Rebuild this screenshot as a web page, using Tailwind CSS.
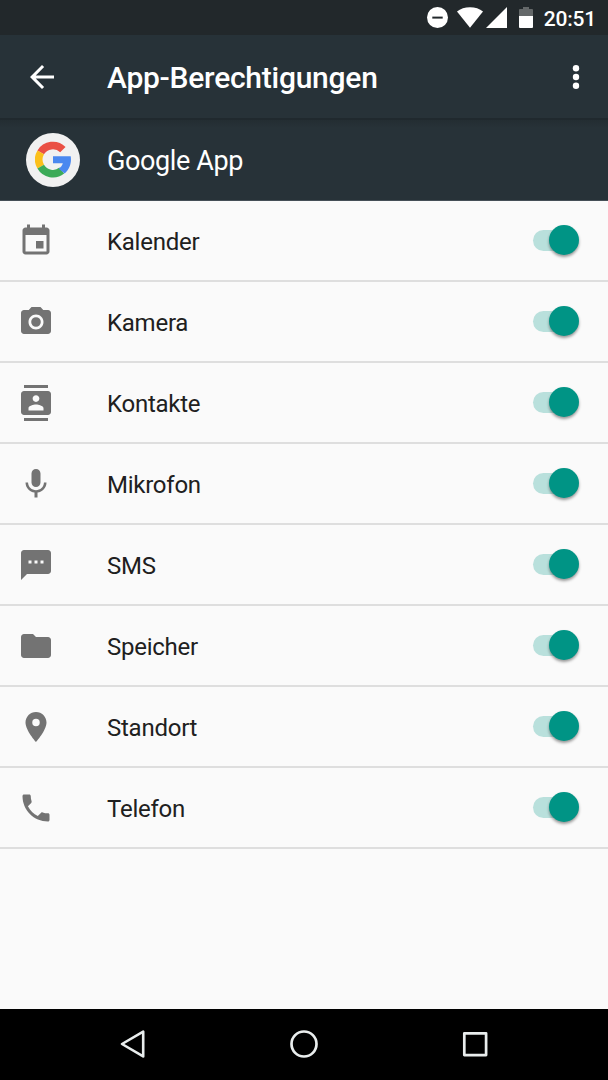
<!doctype html>
<html lang="de">
<head>
  <meta charset="utf-8">
  <title>App-Berechtigungen</title>
  <script src="https://cdn.jsdelivr.net/npm/@tailwindcss/browser@4"></script>
</head>

<body class="bg-[#fafafa] h-[1080px] overflow-hidden flex flex-col font-['Roboto',sans-serif]">
  <!-- status bar -->
  <div class="h-[35px] shrink-0 bg-[#22282b] flex items-center justify-end pr-3 text-white">
    <svg class="w-[21px] h-[21px] mr-[9px]" viewBox="0 0 21 21"><circle cx="10.5" cy="10.5" r="10.5" fill="#fff"/><path d="M5.3 9.6h10.4v2H5.3z" fill="#22282b"/></svg>
    <svg class="w-[26px] h-[21px] mr-[3px]" viewBox="0 0 26 21" fill="#fff"><path d="M13 20.7 0 4.6C3.300 1.800 8 .3 13 .3s9.700 1.500 13 4.300z"/></svg>
    <svg class="w-[21px] h-[21px] mr-3" viewBox="0 0 21 21" fill="#fff"><path d="M0 21 21 0v21z"/></svg>
    <svg class="w-[14px] h-[21px] mr-[11px]" viewBox="0 0 14 21"><path d="M4 0h6v2h3q1 0 1 1v6H0V3q0-1 1-1h3z" fill="#646869"/><path d="M0 9h14v11q0 1-1 1H1q-1 0-1-1z" fill="#fff"/></svg>
    <span class="text-[21px] leading-none font-medium tracking-[-0.2px] mt-[3px]">20:51</span>
  </div>

  <!-- toolbar -->
  <header class="h-[85px] shrink-0 bg-[#273238] border-b-2 border-[#20292e] flex items-center pl-[23.5px] pr-[14.5px] text-white">
    <svg class="w-9 h-9" viewBox="0 0 24 24" fill="#fff"><path d="M20 11H7.830l5.590-5.590L12 4l-8 8 8 8 1.410-1.410L7.830 13H20v-2z"/></svg>
    <h1 class="ml-[47.5px] mt-[3px] text-[30px] leading-none font-medium tracking-[-0.25px] flex-1">App-Berechtigungen</h1>
    <svg class="w-9 h-9" viewBox="0 0 36 36" fill="#fff"><circle cx="18" cy="9.200" r="3.200"/><circle cx="18" cy="18" r="3.200"/><circle cx="18" cy="26.800" r="3.200"/></svg>
  </header>

  <!-- app -->
  <section class="h-[81px] shrink-0 bg-linear-to-b from-[#232d32] to-[#273238] to-10% border-b border-[#454f57] flex items-center pl-[26px] text-white">
    <div class="w-[54px] h-[54px] -mt-px rounded-full bg-[#f1f1f1] flex items-center justify-center">
      <svg class="w-9 h-[37px]" viewBox="0 0 36 37" fill="none" stroke-width="7.600">
        <path d="M27.870 8.630A14.200 14.200 0 0 0 5.700 11.400" stroke="#ea5044"/>
        <path d="M5.700 11.400A14.200 14.200 0 0 0 5.700 25.600" stroke="#fbc01b"/>
        <path d="M5.700 25.600A14.200 14.200 0 0 0 26.800 29.600" stroke="#3cab58"/>
        <path d="M18 15.200h17.700c1 6.500-.8 12.800-6 17.300l-6-4.700c2.200-1.400 3.600-3.300 4.100-5.500H18z" fill="#4a88f0"/>
      </svg>
    </div>
    <h2 class="ml-[27px] mt-[3px] text-[27px] leading-none tracking-[-0.38px]">Google App</h2>
  </section>

  <ul id="permissions" class="flex-1"></ul>

  <!-- navigation bar -->
  <nav class="h-[71px] shrink-0 bg-black flex items-center justify-center gap-[135px]">
    <svg class="w-9 h-9 -mt-px" viewBox="0 0 36 36" fill="none" stroke="#e9eded" stroke-width="2.600" stroke-linejoin="round"><path d="M7 18 28.200 5.700v24.700z"/></svg>
    <svg class="w-9 h-9 -mt-px" viewBox="0 0 36 36" fill="none" stroke="#e9eded" stroke-width="2.700"><circle cx="18" cy="18" r="12.500"/></svg>
    <svg class="w-9 h-9 -mt-px" viewBox="0 0 36 36" fill="none" stroke="#e9eded" stroke-width="2.700" stroke-linejoin="round"><path d="M7.300 7.300h21.800v21.800H7.300z"/></svg>
  </nav>

<script>
/* ---------- permission rows ---------- */
const permissions = [
  { name: 'Kalender', icon: 'M17 12h-5v5h5v-5zM16 1v2H8V1H6v2H5c-1.110 0-1.990.9-1.990 2L3 19c0 1.100.89 2 2 2h14c1.100 0 2-.9 2-2V5c0-1.100-.9-2-2-2h-1V1h-2zm3 18H5V8h14v11z' },
  { name: 'Kamera',   icon: 'M12 8.800a3.200 3.200 0 1 0 0 6.400 3.200 3.200 0 0 0 0-6.400zM9 2L7.170 4H4c-1.100 0-2 .9-2 2v12c0 1.100.9 2 2 2h16c1.100 0 2-.9 2-2V6c0-1.100-.9-2-2-2h-3.170L15 2H9zm3 15c-2.760 0-5-2.240-5-5s2.240-5 5-5 5 2.240 5 5-2.240 5-5 5z' },
  { name: 'Kontakte', icon: 'M20 0H4v2h16V0zM4 24h16v-2H4v2zM20 4H4c-1.100 0-2 .9-2 2v12c0 1.100.9 2 2 2h16c1.100 0 2-.9 2-2V6c0-1.100-.9-2-2-2zm-8 2.750c1.240 0 2.250 1.010 2.250 2.250s-1.010 2.250-2.250 2.250S9.750 10.240 9.750 9 10.760 6.750 12 6.750zM17 17H7v-1.500c0-1.670 3.330-2.500 5-2.500s5 .83 5 2.500V17z' },
  { name: 'Mikrofon', icon: 'M12 14c1.660 0 2.990-1.340 2.990-3L15 5c0-1.660-1.340-3-3-3S9 3.340 9 5v6c0 1.660 1.340 3 3 3zm5.300-3c0 3-2.540 5.100-5.300 5.100S6.700 14 6.700 11H5c0 3.410 2.720 6.230 6 6.720V21h2v-3.280c3.280-.48 6-3.300 6-6.720h-1.700z' },
  { name: 'SMS',      icon: 'M20 2H4c-1.100 0-1.990.9-1.990 2L2 22l4-4h14c1.100 0 2-.9 2-2V4c0-1.100-.9-2-2-2zM9 11H7V9h2v2zm4 0h-2V9h2v2zm4 0h-2V9h2v2z' },
  { name: 'Speicher', icon: 'M10 4H4c-1.100 0-1.990.9-1.990 2L2 18c0 1.100.9 2 2 2h16c1.100 0 2-.9 2-2V8c0-1.100-.9-2-2-2h-8l-2-2z' },
  { name: 'Standort', icon: 'M12 2C8.130 2 5 5.130 5 9c0 5.250 7 13 7 13s7-7.750 7-13c0-3.870-3.130-7-7-7zm0 9.500a2.500 2.500 0 0 1 0-5 2.500 2.500 0 0 1 0 5z' },
  { name: 'Telefon',  icon: 'M6.620 10.790c1.440 2.830 3.760 5.140 6.590 6.590l2.200-2.200c.27-.27.67-.36 1.020-.24 1.120.37 2.330.57 3.570.57.55 0 1 .45 1 1V20c0 .55-.45 1-1 1-9.390 0-17-7.610-17-17 0-.55.45-1 1-1h3.500c.55 0 1 .45 1 1 0 1.250.2 2.450.57 3.570.11.35.03.74-.25 1.020l-2.200 2.200z' },
];

const list = document.getElementById('permissions');

for (const p of permissions) {
  const li = document.createElement('li');
  li.className = "h-[81px] border-b-2 border-[#dedede] flex items-center pl-[17.5px] pr-[29px]";

  li.innerHTML = `
    <svg class="w-9 h-9" viewBox="0 0 24 24" fill="#737373"><path d="${p.icon}"/></svg>
    <span class="ml-[53.5px] mt-[2px] flex-1 text-2xl leading-none tracking-[-0.25px] text-[#202020]">${p.name}</span>
    <div class="w-[46.5px] h-[21px] -mt-px flex items-center">
      <div class="w-[40px] h-[21px] rounded-full bg-[#b9e0dc]"></div>
      <div class="w-[30px] h-[30px] -ml-[23.5px] shrink-0 rounded-full bg-[#009485] shadow-[0_2px_3px_rgba(0,0,0,0.4)]"></div>
    </div>
  `;
  list.appendChild(li);
}
</script>
</body>
</html>
